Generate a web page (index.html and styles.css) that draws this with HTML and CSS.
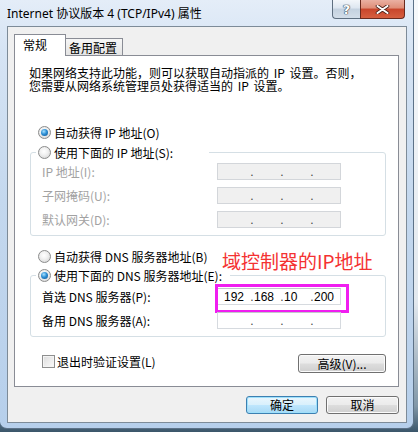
FILE: index.html
```html
<!DOCTYPE html>
<html lang="zh-CN">
    <head>
        <meta charset="UTF-8">
        <title>Internet 协议版本 4 (TCP/IPv4) 属性</title>
        <link rel="stylesheet" href="styles.css">
    </head>
    <body>
        <div class="window">
            <div class="titlebar">
                <span class="title">Internet 协议版本 4 (TCP/IPv4) 属性</span>
                <div class="caps">
                    <span class="cap help">?</span>
                    <span class="cap close">
                        <svg width="15" height="9" viewBox="0 0 15 9">
                            <path d="M2.5 1 L12.5 8 M12.5 1 L2.5 8" stroke="#4a2018" stroke-width="3.6" stroke-linecap="round"/>
                            <path d="M2.5 1 L12.5 8 M12.5 1 L2.5 8" stroke="#fff" stroke-width="2" stroke-linecap="round"/>
                        </svg>
                    </span>
                </div>
            </div>

            <div class="client">
                <div class="tabs">
                    <div class="tab active">常规</div>
                    <div class="tab">备用配置</div>
                </div>

                <div class="panel">
                    <p class="desc">如果网络支持此功能，则可以获取自动指派的 IP 设置。否则，<br>您需要从网络系统管理员处获得适当的 IP 设置。</p>

                    <div class="option first"><span class="radio on"></span>自动获得 IP 地址(O)</div>

                    <div class="group">
                        <div class="legend legend-ip"><span class="radio"></span>使用下面的 IP 地址(S):</div>
                        <div class="fields ip-fields">
                            <div class="field disabled">
                                <span class="field-label">IP 地址(I):</span>
                                <span class="ip"><span class="oct"></span><span class="dot">.</span><span class="oct"></span><span class="dot">.</span><span class="oct"></span><span class="dot">.</span><span class="oct"></span></span>
                            </div>
                            <div class="field disabled">
                                <span class="field-label">子网掩码(U):</span>
                                <span class="ip"><span class="oct"></span><span class="dot">.</span><span class="oct"></span><span class="dot">.</span><span class="oct"></span><span class="dot">.</span><span class="oct"></span></span>
                            </div>
                            <div class="field disabled">
                                <span class="field-label">默认网关(D):</span>
                                <span class="ip"><span class="oct"></span><span class="dot">.</span><span class="oct"></span><span class="dot">.</span><span class="oct"></span><span class="dot">.</span><span class="oct"></span></span>
                            </div>
                        </div>
                    </div>

                    <div class="option dns-auto"><span class="radio"></span>自动获得 DNS 服务器地址(B)</div>

                    <div class="group dns">
                        <div class="legend legend-dns"><span class="radio on"></span>使用下面的 DNS 服务器地址(E):</div>
                        <div class="fields dns-fields">
                            <div class="field">
                                <span class="field-label">首选 DNS 服务器(P):</span>
                                <span class="ip marked"><span class="oct">192</span><span class="dot">.</span><span class="oct">168</span><span class="dot">.</span><span class="oct">10</span><span class="dot">.</span><span class="oct">200</span></span>
                            </div>
                            <div class="field">
                                <span class="field-label">备用 DNS 服务器(A):</span>
                                <span class="ip"><span class="oct"></span><span class="dot">.</span><span class="oct"></span><span class="dot">.</span><span class="oct"></span><span class="dot">.</span><span class="oct"></span></span>
                            </div>
                        </div>
                    </div>

                    <div class="bottom-row">
                        <div class="check-label"><span class="checkbox"></span>退出时验证设置(L)</div>
                        <button class="btn advanced">高级(V)...</button>
                    </div>

                    <span class="note">域控制器的IP地址</span>
                </div>

                <div class="actions">
                    <button class="btn default ok">确定</button>
                    <button class="btn cancel">取消</button>
                </div>
            </div>
        </div>
    </body>
</html>
```

FILE: styles.css
```css
html {
    background: linear-gradient(to bottom, #f7f9fb 0%, #e2e8ee 70%, #8197a8 94%, #3a566a 100%);
}

html, body {
    margin: 0;
}

body {
    width: 418px;
    height: 432px;
    overflow: hidden;
    font-family: "Noto Sans CJK SC", sans-serif;
    font-size: 12px;
    color: #000;
}

.window {
    width: 414px;
    height: 429px;
    box-sizing: border-box;
    padding: 0 6px 5px 7px;
    background: linear-gradient(to bottom, #e4edf8 0px, #d6e4f4 50px, #c4d8ee 200px, #b6cfeb 100%);
    border-right: 1px solid #5d7288;
    border-bottom: 1px solid #5d7288;
    border-radius: 0 0 7px 7px;
    display: flex;
    flex-direction: column;
}

/* title bar */
.titlebar {
    height: 26px;
    display: flex;
    align-items: flex-start;
}

.title {
    margin-top: 6px;
    line-height: 16px;
    font-family: "Noto Sans", "Noto Sans CJK SC", sans-serif;
    font-size: 12px;
}

.caps {
    margin-left: auto;
    margin-right: 2px;
    display: flex;
}

.cap {
    height: 19px;
    box-sizing: border-box;
    display: flex;
    align-items: center;
    justify-content: center;
    border: 1px solid #5f6f80;
    border-top: none;
}

.help {
    width: 28px;
    border-right: none;
    border-radius: 0 0 0 4px;
    background: linear-gradient(to bottom, #f3f6fa 0%, #dde6f0 45%, #c4d1df 50%, #d3dee9 100%);
    color: #fff;
    font-family: "DejaVu Sans", sans-serif;
    font-weight: bold;
    font-size: 13px;
    text-shadow: 0 0 1px #2c3a4a, 0 0 1px #2c3a4a, 0 0 1px #2c3a4a;
}

.close {
    width: 45px;
    border-color: #6a2a1e;
    border-radius: 0 0 4px 0;
    background: linear-gradient(to bottom, #eab0a2 0%, #df8d77 45%, #c8452b 50%, #d65f40 100%);
}

/* client area */
.client {
    height: 397px;
    box-sizing: border-box;
    border: 1px solid #7d8b98;
    background-color: #f0f0f0;
    padding: 7px 7px 0 6px;
}

.tabs {
    display: flex;
    align-items: flex-end;
    height: 21px;
}

.tab {
    box-sizing: border-box;
    border: 1px solid #898c95;
    border-bottom: none;
    line-height: 16px;
}

.tab.active {
    width: 52px;
    height: 22px;
    margin-bottom: -1px;
    padding: 2px 0 0 8px;
    background-color: #fff;
    position: relative;
    z-index: 1;
}

.tab:not(.active) {
    width: 57px;
    height: 17px;
    padding: 1px 0 0 3px;
    border-left: none;
    background: linear-gradient(to bottom, #f6f6f6, #e4e4e4);
}

.panel {
    position: relative;
    height: 332px;
    box-sizing: border-box;
    border: 1px solid #898c95;
    background-color: #fff;
}

.desc {
    margin: 10px 0 0 14px;
    line-height: 13px;
    word-spacing: 2px;
}

.option {
    display: flex;
    align-items: center;
    gap: 3px;
    height: 16px;
    margin-left: 23px;
}

.option.first {
    margin-top: 32px;
}

.option.dns-auto {
    margin-top: 12px;
}

.radio {
    width: 13px;
    height: 13px;
    box-sizing: border-box;
    border-radius: 50%;
    border: 1px solid #8b8c8c;
    background: radial-gradient(circle at 45% 40%, #ffffff 0%, #f1f1f1 40%, #cfcfcf 100%);
    display: flex;
    align-items: center;
    justify-content: center;
    flex: none;
}

.radio.on::after {
    content: "";
    width: 7px;
    height: 7px;
    border-radius: 50%;
    background: radial-gradient(circle at 40% 35%, #a8e2ff 0%, #2d8fd5 45%, #0c4f8c 100%);
}

/* group boxes */
.group {
    margin: 12px 12px 0 15px;
    border: 1px solid #d5dfe5;
    border-radius: 3px;
    padding-bottom: 7px;
}

.group.dns {
    margin-top: 11px;
}

.legend {
    display: flex;
    align-items: center;
    gap: 3px;
    height: 16px;
    margin: -9px 0 0 5px;
    padding-left: 2px;
    background-color: #fff;
    box-sizing: border-box;
}

.legend-ip {
    width: 173px;
}

.legend-dns {
    width: 194px;
}

.fields {
    display: flex;
    flex-direction: column;
    gap: 7px;
}

.ip-fields {
    margin-top: 3px;
}

.dns-fields {
    margin-top: 5px;
}

.field {
    display: flex;
    align-items: center;
    height: 17px;
}

.field-label {
    width: 186px;
    padding-left: 11px;
    box-sizing: border-box;
}

.field.disabled .field-label {
    color: #a2a2a2;
}

.ip {
    position: relative;
    width: 124px;
    height: 17px;
    box-sizing: border-box;
    border: 1px solid #d6dadf;
    border-top-color: #c3c7cc;
    background-color: #fff;
    padding-left: 6px;
    display: flex;
    align-items: center;
    font-family: "Liberation Sans", sans-serif;
    font-size: 12px;
}

.field.disabled .ip {
    background-color: #f0f0f0;
    border-color: #d3d6da;
}

.oct {
    width: 26px;
}

.dot {
    width: 4px;
    text-align: center;
    color: #444;
}

.ip.marked::after {
    content: "";
    position: absolute;
    left: -3px;
    top: -5px;
    width: 134px;
    height: 29px;
    box-sizing: border-box;
    border: 3px solid #f01ef0;
}

/* bottom row */
.bottom-row {
    display: flex;
    justify-content: space-between;
    margin: 17px 12px 0 27px;
    height: 19px;
}

.check-label {
    display: flex;
    align-items: center;
    gap: 2px;
    height: 15px;
}

.checkbox {
    width: 13px;
    height: 13px;
    box-sizing: border-box;
    border: 1px solid #8e8f8f;
    background: linear-gradient(135deg, #dcdcdc, #fbfbfb);
    box-shadow: inset 0 0 0 1px #f4f4f4;
}

.btn {
    font-family: "Noto Sans CJK SC", sans-serif;
    font-size: 12px;
    color: #000;
    padding: 0;
    line-height: 14px;
    border: 1px solid #707070;
    border-radius: 3px;
    background: linear-gradient(to bottom, #f2f2f2 0%, #ebebeb 48%, #dddddd 52%, #cfcfcf 100%);
    box-shadow: inset 0 0 0 1px #fbfbfb;
}

.advanced {
    width: 88px;
    height: 19px;
}

.note {
    position: absolute;
    left: 207px;
    top: 195px;
    font-size: 19px;
    line-height: 19px;
    color: #f43232;
}

.actions {
    display: flex;
    justify-content: flex-end;
    gap: 8px;
    margin-top: 9px;
}

.actions .btn {
    height: 18px;
}

.ok {
    width: 72px;
}

.cancel {
    width: 73px;
}

.btn.default {
    border-color: #3c7fb1;
    background: linear-gradient(to bottom, #eaf6fd 0%, #d9f0fc 48%, #bee6fd 52%, #a7d9f5 100%);
    box-shadow: inset 0 0 0 1px #9ee0fb;
}
```
